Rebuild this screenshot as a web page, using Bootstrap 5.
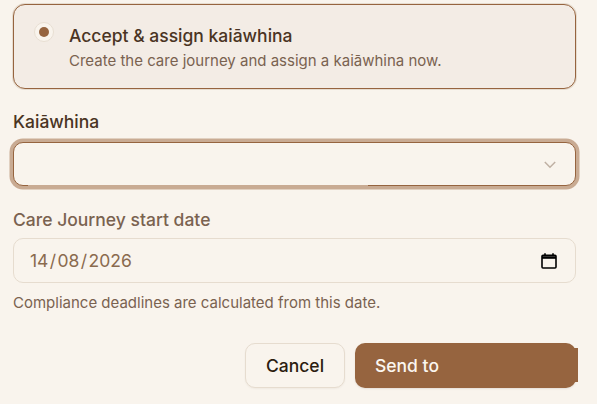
<!doctype html>
<html lang="en"><head><meta charset="utf-8">
<title>Accept</title>
<link rel="stylesheet" href="https://cdn.jsdelivr.net/npm/bootstrap@5.3.0/dist/css/bootstrap.min.css">
<style>
html,body{height:404px;overflow:hidden}
body{background:#f9f4ed;font-family:Inter,"Liberation Sans",sans-serif;color:#3f2a1a}
.sheet{padding:4px 21px 0 13px}
.choice{height:85px;background:#f3ece5;border:1px solid #96643f;border-radius:12px;box-shadow:0 0 0 1px #e6dccf;padding:15px 20px 0 20px;gap:15px}
.dotwrap{width:20px;height:20px;margin-top:2px;border-radius:50%;background:#f9f4ed;border:1px solid #e8dfd3;flex:none;display:flex;align-items:center;justify-content:center}
.dotwrap span{width:10px;height:10px;border-radius:50%;background:#96643f}
.choice-t{font-size:17.5px;font-weight:450;line-height:24px;color:#4a3423;margin-top:4px}
.choice-s{font-size:15px;line-height:20px;color:#7a6250;margin-top:3px}
.lbl1{font-size:17.5px;font-weight:450;line-height:24px;margin:21px 0 8px;color:#4a3423}
.lbl2{font-size:17.5px;font-weight:450;line-height:24px;margin:22px 0 6px;color:#7a6250}
.selbox{height:44px;background:#f9f4ed;border:1px solid #96643f;border-radius:10px;box-shadow:0 0 0 3.5px #c9ab93}
.selbox svg{position:absolute;right:19px;top:18px}
.selbox::after{content:"";position:absolute;left:14px;width:340px;bottom:-1px;height:1px;background:#c9ab93}
.datebox{height:45px;background:#f9f4ed;border:1px solid #e6dccf;border-radius:10px;padding:1px 18px 0 16px;font-size:17.5px;color:#8a6a4e}
.datebox svg{margin-top:-1px}
.dsep{padding:0 1.4px}
.hint{font-size:15px;line-height:20px;color:#7a6250;margin-top:10px}
.acts{margin-top:30px;gap:10px}
.b-cancel,.b-cancel:hover{width:100px;height:45px;background:#f9f4ed;border:1px solid #e6dccf;border-radius:10px;color:#2c1c10;font-size:17.5px;font-weight:450;padding:1px 0 0;box-shadow:0 1px 2px rgba(60,40,20,.05)}
.b-send,.b-send:hover{width:221px;height:45px;background:#96643f;border:0;border-radius:10px;color:#fbf6f0;font-size:17.5px;font-weight:450;padding:1px 0 0 20px;text-align:left;box-shadow:0 1px 2px rgba(60,40,20,.1)}
.b-send::after{content:"";position:absolute;right:-2px;top:5px;bottom:6px;width:8px;background:#96643f}
</style></head>
<body>
<div class="sheet">
  <div class="choice d-flex">
    <div class="dotwrap"><span></span></div>
    <div>
      <div class="choice-t">Accept &amp; assign kaiāwhina</div>
      <div class="choice-s">Create the care journey and assign a kaiāwhina now.</div>
    </div>
  </div>
  <div class="lbl1">Kaiāwhina</div>
  <div class="selbox position-relative">
    <svg width="12" height="8" viewBox="0 0 12 8" fill="none" stroke="#bfb0a3" stroke-width="1.5"><path d="M.8 1 6 6.2 11.2 1"/></svg>
  </div>
  <div class="lbl2">Care Journey start date</div>
  <div class="datebox d-flex align-items-center justify-content-between">
    <span>14<span class="dsep">/</span>08<span class="dsep">/</span>2026</span>
    <svg width="16" height="16" viewBox="0 0 16 16" fill="none" stroke="#000"><rect x="1" y="2.2" width="14" height="12.8" rx="1" stroke-width="1.6"/><path d="M1 4.5h14" stroke-width="2.6"/><path d="M4 .3v2M12 .3v2" stroke-width="1.6"/></svg>
  </div>
  <div class="hint">Compliance deadlines are calculated from this date.</div>
  <div class="acts d-flex justify-content-end">
    <button class="btn b-cancel">Cancel</button>
    <button class="btn b-send position-relative">Send to</button>
  </div>
</div>
<script src="https://cdn.jsdelivr.net/npm/bootstrap@5.3.0/dist/js/bootstrap.bundle.min.js"></script>
</body></html>
